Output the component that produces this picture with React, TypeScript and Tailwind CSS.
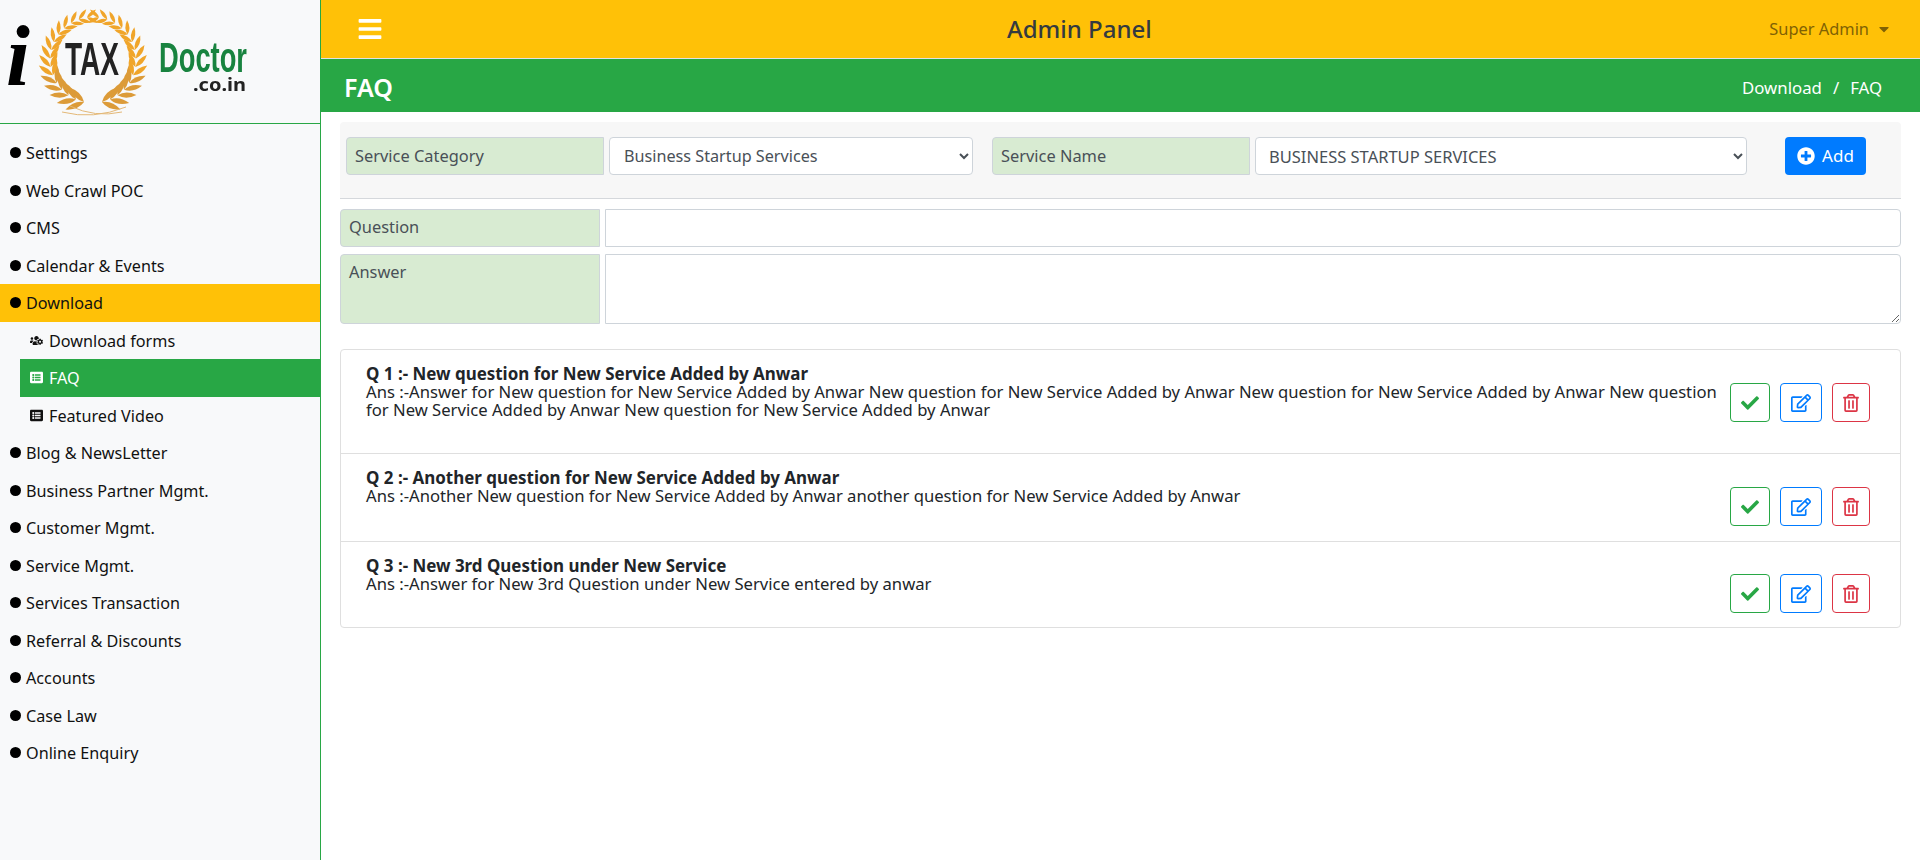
import React from "react";
import { FaBars, FaCheck, FaRegEdit, FaRegTrashAlt, FaPlusCircle, FaUsersCog, FaListAlt, FaCaretDown } from "react-icons/fa";

const FONT = "font-['Noto_Sans','Open_Sans',sans-serif]";

function Logo() {
  const leaves: React.ReactNode[] = [];
  const cx = 93;
  const cy = 60;
  const R = 43;
  const steps = 15;
  for (const side of [-1, 1]) {
    for (let i = 0; i < steps; i++) {
      const t = i / (steps - 1);
      const phi = ((168 - t * 160) * Math.PI) / 180;
      const x = cx + side * R * Math.sin(phi);
      const y = cy - R * Math.cos(phi);
      const dx = -side * Math.cos(phi);
      const dy = -Math.sin(phi);
      const base = (Math.atan2(dy, dx) * 180) / Math.PI;
      const L = 20 - t * 8;
      const w = 5.5 - t * 2;
      const color = t < 0.35 ? "#dc9b38" : "#f0a52a";
      for (const s of [-1, 1]) {
        const ang = base + s * 34;
        leaves.push(
          <path
            key={`${side}-${i}-${s}`}
            d={`M0 0 Q${L * 0.45} ${-w} ${L} 0 Q${L * 0.45} ${w} 0 0 Z`}
            fill={color}
            transform={`translate(${x} ${y}) rotate(${ang})`}
          />
        );
      }
    }
  }
  return (
    <svg width="320" height="123" viewBox="0 0 320 123" className="blur-[0.4px]">
      {leaves}
      <path d="M62 112 Q93 120 126 107 M70 106 Q95 118 122 112" stroke="#e3b877" strokeWidth="1" fill="none" />
      <text x="6" y="85" fontFamily="Liberation Serif" fontStyle="italic" fontWeight="700" fontSize="86" fill="#000">i</text>
      <text x="65" y="75" textLength="54" lengthAdjust="spacingAndGlyphs" fontFamily="Liberation Sans" fontSize="47" fontWeight="700" fill="#222">TAX</text>
      <text x="159" y="72" textLength="88" lengthAdjust="spacingAndGlyphs" fontFamily="Liberation Sans" fontSize="42" fontWeight="700" fill="#18833f">Doctor</text>
      <text x="193" y="91" textLength="53" lengthAdjust="spacingAndGlyphs" fontFamily="Noto Sans" fontWeight="700" fontSize="17" fill="#222">.co.in</text>
    </svg>
  );
}

function Item({ label, active }: { label: string; active?: boolean }) {
  return (
    <div className={`h-[37.5px] flex items-center pl-[10px] text-[16.2px] text-[#111] ${active ? "bg-[#ffc107]" : ""}`}>
      <span className="w-[11px] h-[11px] rounded-full bg-black mr-[5px] shrink-0" />
      <span className="pt-px">{label}</span>
    </div>
  );
}

function SubItem({ label, active, icon }: { label: string; active?: boolean; icon: React.ReactNode }) {
  return (
    <div className={`h-[37.5px] ml-[20px] flex items-center pl-[10px] text-[16.2px] ${active ? "bg-[#28a745] text-white" : "text-[#111]"}`}>
      <span className="w-[13px] flex justify-center mr-[6px] text-[13px]">{icon}</span>
      <span className="pt-px">{label}</span>
    </div>
  );
}

function Label({ children, className }: { children: React.ReactNode; className: string }) {
  return (
    <div className={`bg-[#d8ebd2] border border-[#ced4da] rounded-l-[4px] text-[16.4px] text-[#495057] px-[8px] ${className}`}>
      {children}
    </div>
  );
}

function Actions() {
  return (
    <div className="flex gap-[10px] shrink-0">
      <button className="w-[40px] h-[39px] border border-[#28a745] rounded-[4px] text-[#28a745] flex items-center justify-center text-[18px]"><FaCheck /></button>
      <button className="w-[42px] h-[39px] border border-[#007bff] rounded-[4px] text-[#007bff] flex items-center justify-center text-[20px]"><FaRegEdit /></button>
      <button className="w-[38px] h-[39px] border border-[#dc3545] rounded-[4px] text-[#dc3545] flex items-center justify-center text-[18px]"><FaRegTrashAlt /></button>
    </div>
  );
}

function Faq({ q, a, className, pad }: { q: string; a: string; className: string; pad: string }) {
  return (
    <div className={`flex pl-[25px] pr-[30px] pt-[15px] ${className}`}>
      <div className="flex-1 leading-[18px] text-[16.65px] text-[#212529] pr-[6px]">
        <div className="font-bold text-[16.95px]">{q}</div>
        <div>{a}</div>
      </div>
      <div className={pad}><Actions /></div>
    </div>
  );
}

export default function App() {
  const menuTop = ["Settings", "Web Crawl POC", "CMS", "Calendar & Events"];
  const menuBottom = ["Blog & NewsLetter", "Business Partner Mgmt.", "Customer Mgmt.", "Service Mgmt.", "Services Transaction", "Referral & Discounts", "Accounts", "Case Law", "Online Enquiry"];
  return (
    <div className={`flex h-[860px] w-[1920px] overflow-hidden bg-white ${FONT}`}>
      <aside className="w-[321px] shrink-0 bg-[#f8f9fa] border-r border-[#28a745]">
        <div className="h-[124px] border-b border-[#28a745]"><Logo /></div>
        <nav className="pt-[10px]">
          {menuTop.map((m) => <Item key={m} label={m} />)}
          <Item label="Download" active />
          <SubItem label="Download forms" icon={<FaUsersCog />} />
          <SubItem label="FAQ" active icon={<FaListAlt />} />
          <SubItem label="Featured Video" icon={<FaListAlt />} />
          {menuBottom.map((m) => <Item key={m} label={m} />)}
        </nav>
      </aside>
      <main className="flex-1 min-w-0">
        <header className="h-[59px] bg-[#ffc107] border-b border-[#dee2e6] flex items-center justify-between pl-[36px] pr-[28px] relative">
          <FaBars className="text-white text-[26px]" />
          <div className="text-[24px] font-medium text-[#343a40] absolute left-[686px]">Admin Panel</div>
          <div className="flex items-center gap-[7px] text-[16.4px] text-[#806104] pt-px">Super Admin <FaCaretDown className="text-[16px]" /></div>
        </header>
        <div className="h-[53px] bg-[#28a745] flex items-center justify-between pl-[23px] pr-[38px] text-white pt-[5px]">
          <div className="text-[25px] font-semibold">FAQ</div>
          <div className="text-[16.8px] flex gap-[11px]"><span>Download</span><span>/</span><span>FAQ</span></div>
        </div>
        <div className="pl-[19px] pr-[19px] pt-[10px]">
          <div className="h-[77px] bg-[#f7f7f7] border-b border-[#d5d8dc] rounded-t-[4px] flex items-start pt-[15px] pl-[6px] pr-[34px]">
            <Label className="w-[258px] h-[38px] leading-[36px]">Service Category</Label>
            <select className="ml-[5px] w-[364px] h-[38px] bg-white border border-[#ced4da] rounded-[4px] px-[10px] text-[16.2px] text-[#495057]">
              <option>Business Startup Services</option>
            </select>
            <Label className="ml-[19px] w-[258px] h-[38px] leading-[36px]">Service Name</Label>
            <select className="ml-[5px] w-[492px] h-[38px] bg-white border border-[#ced4da] rounded-[4px] px-[9px] text-[16.5px] text-[#495057]">
              <option>BUSINESS STARTUP SERVICES</option>
            </select>
            <button className="ml-[38px] w-[81px] h-[38px] bg-[#007bff] rounded-[4px] text-white text-[17px] flex items-center justify-center gap-[7px]"><FaPlusCircle className="text-[18px]" />Add</button>
          </div>
          <div className="flex mt-[10px] gap-[5px] h-[38px]">
            <Label className="w-[260px] leading-[34px]">Question</Label>
            <input className="flex-1 bg-white border border-[#ced4da] rounded-r-[4px]" />
          </div>
          <div className="flex mt-[7px] gap-[5px] h-[70px]">
            <Label className="w-[260px] leading-[34px]">Answer</Label>
            <textarea className="flex-1 bg-white border border-[#ced4da] rounded-r-[4px]" />
          </div>
          <div className="mt-[25px] border border-[#dfdfdf] rounded-[4px]">
            <Faq
              className="h-[104px] border-b border-[#dfdfdf]"
              pad="pt-[18px]"
              q="Q 1 :- New question for New Service Added by Anwar"
              a="Ans :-Answer for New question for New Service Added by Anwar New question for New Service Added by Anwar New question for New Service Added by Anwar New question for New Service Added by Anwar New question for New Service Added by Anwar"
            />
            <Faq
              className="h-[88px] border-b border-[#dfdfdf]"
              pad="pt-[18px]"
              q="Q 2 :- Another question for New Service Added by Anwar"
              a="Ans :-Another New question for New Service Added by Anwar another question for New Service Added by Anwar"
            />
            <Faq
              className="h-[85px]"
              pad="pt-[17px]"
              q="Q 3 :- New 3rd Question under New Service"
              a="Ans :-Answer for New 3rd Question under New Service entered by anwar"
            />
          </div>
        </div>
      </main>
    </div>
  );
}
